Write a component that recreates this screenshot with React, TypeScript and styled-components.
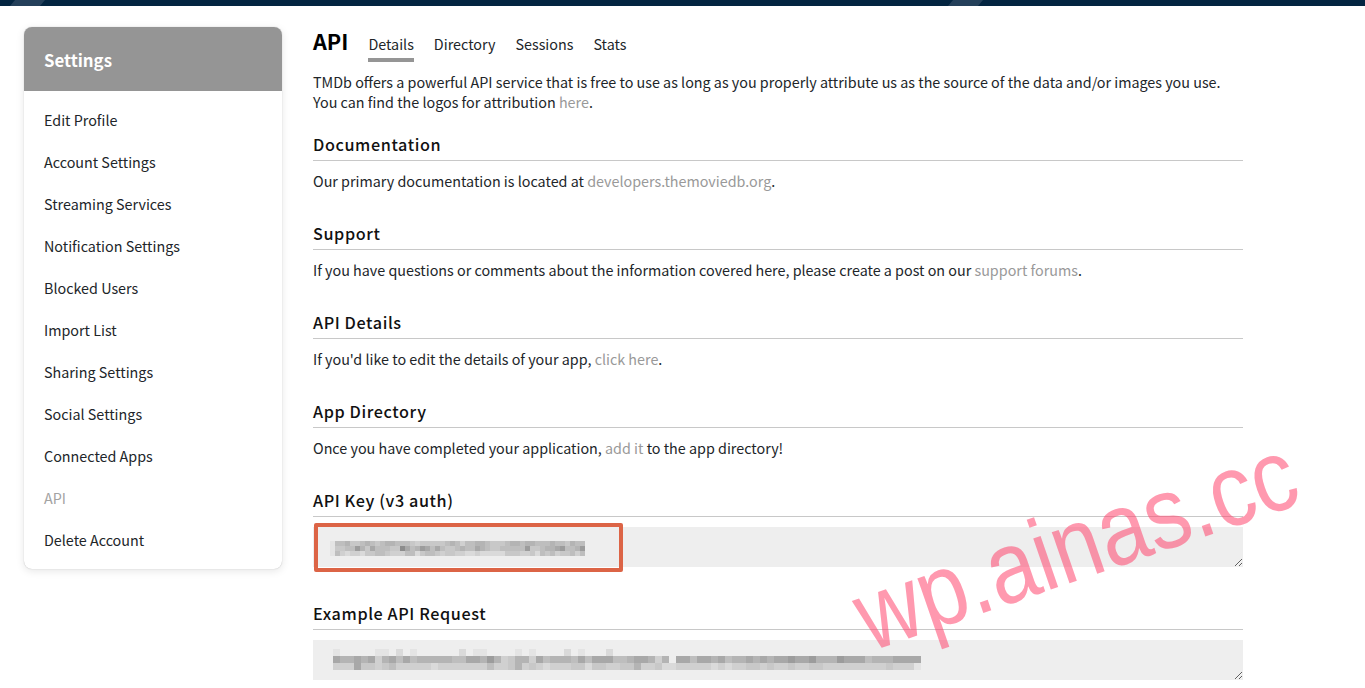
import React from "react";
import styled, { createGlobalStyle } from "styled-components";

const Global = createGlobalStyle`
  html, body { margin: 0; padding: 0; background: #fff; overflow: hidden; height: 688px; }
  body { font-family: "Noto Sans CJK SC", "Source Sans Pro", "Open Sans", sans-serif; font-size: 14.34px; color: #212529; }
  * { box-sizing: border-box; }
`;

const Page = styled.div`position: relative; width: 1365px; height: 688px; overflow: hidden;`;
const TopBar = styled.div`display: flex; height: 6px; background: #032541;`;
const Stripe = styled.div<{ $left: number }>`
  width: 35px; height: 6px; margin-left: ${p => p.$left}px; background: #24405a;
  clip-path: polygon(5px 0, 35px 0, 30px 100%, 0 100%);
`;
const Main = styled.div`display: flex; align-items: flex-start; padding: 21px 0 0 24px; gap: 31px;`;
const Card = styled.nav`
  width: 258px; flex: none; margin: 0; border-radius: 8px; background: #fff; overflow: hidden;
  box-shadow: 0 2px 8px rgba(0,0,0,.1), 0 0 1px rgba(0,0,0,.3);
`;
const CardHead = styled.div`
  height: 64px; background: #959595; color: #fff; font-size: 16.8px; font-weight: 700;
  display: flex; align-items: center; padding: 1px 0 0 20px;
`;
const NavList = styled.ul`list-style: none; margin: 0; padding: 8px 0;`;
const NavItem = styled.li<{ $active?: boolean }>`
  height: 42px; line-height: 41px; padding-left: 20px; font-size: 14.34px;
  color: ${p => (p.$active ? "#a3a3a3" : "#212529")};
`;
const Content = styled.main`width: 930px; flex: none;`;
const TitleRow = styled.div`display: flex; align-items: flex-start; height: 35px;`;
const Title = styled.h1`margin: 0 20px 0 0; font-size: 21.6px; font-weight: 700; line-height: 27px; color: #000;`;
const Tab = styled.div<{ $active?: boolean }>`
  margin-right: 20px; margin-top: 3px; height: 32px; line-height: 27px; font-size: 14.34px; color: #212529;
  border-bottom: 4px solid ${p => (p.$active ? "#959595" : "transparent")};
`;
const Para = styled.p`margin: 0; font-size: 14.34px; line-height: 20px; color: #212529;`;
const Intro = styled(Para)`margin-top: 10px; line-height: 20px;`;
const Link = styled.a`color: #999;`;
const Section = styled.section<{ $gap?: number }>`margin-top: ${p => p.$gap ?? 30}px;`;
const Heading = styled.h3`
  margin: 0; height: 29px; line-height: 25px; font-size: 16.2px; font-weight: 500; color: #111;
  letter-spacing: .6px; border-bottom: 1px solid #c8c8c8;
`;
const Body = styled(Para)`margin-top: 10px;`;
const FieldWrap = styled.div`position: relative; margin-top: 10px; height: 40px;`;
const Field = styled.textarea`
  display: block; width: 930px; height: 40px; border: 0; outline: 0; padding: 0; background: #eeeeee; resize: both;
`;
const Masked = styled.svg<{ $left: number; $top: number }>`
  position: absolute; left: ${p => p.$left}px; top: ${p => p.$top}px; pointer-events: none;
`;
const Highlight = styled.div`
  position: absolute; left: 1px; top: -4px; width: 309px; height: 49px;
  border: 4px solid #dc6446; border-radius: 2px; pointer-events: none;
`;
const Watermark = styled.div`
  position: absolute; left: 877px; top: 574px; font-family: "Liberation Sans", Arial, sans-serif;
  font-size: 88px; line-height: 100px; white-space: nowrap; color: rgba(255, 70, 110, .55);
  transform: rotate(-19deg) scale(1, 1.16); transform-origin: 0 100%; pointer-events: none;
`;

const shades = ["#eeeeee", "#e4e4e4", "#dadada", "#d0d0d0", "#c8c8c8", "#bebebe", "#b4b4b4", "#a8a8a8", "#9c9c9c", "#8c8c8c"];

function Mosaic({ rows, cell, left, top }: { rows: string[]; cell: number; left: number; top: number }) {
  const width = Math.max(...rows.map(r => r.length)) * cell;
  return (
    <Masked $left={left} $top={top} width={width} height={rows.length * cell} shapeRendering="crispEdges">
      {rows.flatMap((row, y) =>
        row.split("").map((c, x) => (
          <rect key={`${x}-${y}`} x={x * cell} y={y * cell} width={cell} height={cell} fill={shades[+c]} />
        ))
      )}
    </Masked>
  );
}

const keyRows = [
  "155644565456655543444445653556654445665665556554655",
  "144558647555449756875754456557654455555844566785568",
  "153233244554333552455434433223222224443342545344535",
];
const requestRows = [
  "100000110201000000201100001010000201000200000000000000000000000000000000000000000000",
  "766767367575666665577686346637566657577755677636077577675667676778778666877756667777",
  "333744345333332333333353346343233344244334463342233333232334434334334433333333343331",
];

const navItems = ["Edit Profile", "Account Settings", "Streaming Services", "Notification Settings", "Blocked Users", "Import List", "Sharing Settings", "Social Settings", "Connected Apps", "API", "Delete Account"];

export default function App() {
  return (
    <Page>
      <Global />
      <TopBar>
        <Stripe $left={10} />
        <Stripe $left={903} />
      </TopBar>
      <Main>
        <Card>
          <CardHead>Settings</CardHead>
          <NavList>
            {navItems.map(n => (
              <NavItem key={n} $active={n === "API"}>{n}</NavItem>
            ))}
          </NavList>
        </Card>
        <Content>
          <TitleRow>
            <Title>API</Title>
            <Tab $active>Details</Tab>
            <Tab>Directory</Tab>
            <Tab>Sessions</Tab>
            <Tab>Stats</Tab>
          </TitleRow>
          <Intro>
            TMDb offers a powerful API service that is free to use as long as you properly attribute us as the source of the data and/or images you use.
            <br />
            You can find the logos for attribution <Link>here</Link>.
          </Intro>
          <Section $gap={20}>
            <Heading>Documentation</Heading>
            <Body>Our primary documentation is located at <Link>developers.themoviedb.org</Link>.</Body>
          </Section>
          <Section>
            <Heading>Support</Heading>
            <Body>If you have questions or comments about the information covered here, please create a post on our <Link>support forums</Link>.</Body>
          </Section>
          <Section>
            <Heading>API Details</Heading>
            <Body>If you'd like to edit the details of your app, <Link>click here</Link>.</Body>
          </Section>
          <Section>
            <Heading>App Directory</Heading>
            <Body>Once you have completed your application, <Link>add it</Link> to the app directory!</Body>
          </Section>
          <Section>
            <Heading>API Key (v3 auth)</Heading>
            <FieldWrap>
              <Field readOnly />
              <Mosaic rows={keyRows} cell={5} left={17} top={14} />
              <Highlight />
            </FieldWrap>
          </Section>
          <Section $gap={34}>
            <Heading>Example API Request</Heading>
            <FieldWrap>
              <Field readOnly />
              <Mosaic rows={requestRows} cell={7} left={20} top={9} />
            </FieldWrap>
          </Section>
        </Content>
      </Main>
      <Watermark>wp.ainas.cc</Watermark>
    </Page>
  );
}
